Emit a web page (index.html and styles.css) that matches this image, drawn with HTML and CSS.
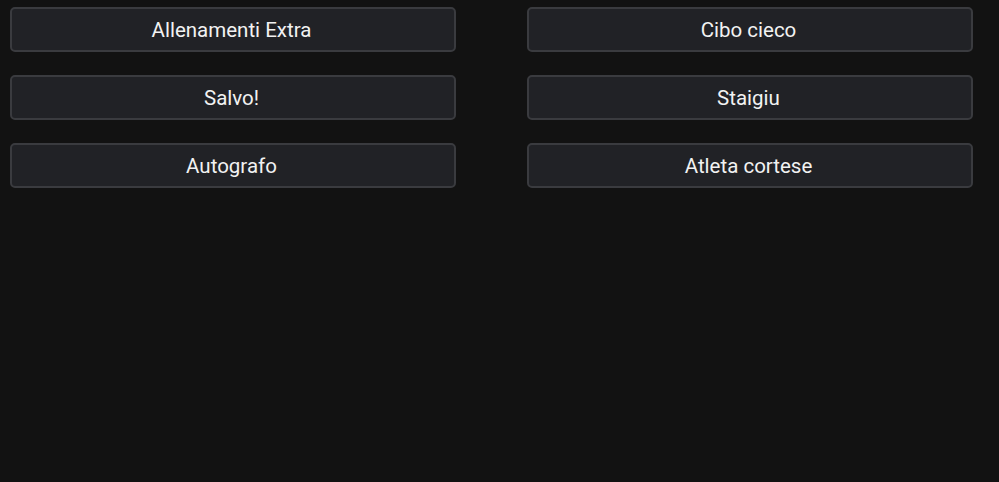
FILE: index.html
```html
<!DOCTYPE html>
<html>
<head>
<meta charset="utf-8">
<link rel="stylesheet" href="styles.css">
</head>
<body>
<div class="grid">
  <button class="btn">Allenamenti Extra</button>
  <button class="btn">Cibo cieco</button>
  <button class="btn">Salvo!</button>
  <button class="btn">Staigiu</button>
  <button class="btn">Autografo</button>
  <button class="btn">Atleta cortese</button>
</div>
</body>
</html>
```
FILE: styles.css
```css
html, body {
  margin: 0;
  padding: 0;
  background: #121212;
  height: 100%;
}
body {
  font-family: Roboto, "Liberation Sans", sans-serif;
}
.grid {
  display: grid;
  grid-template-columns: 446px 446px;
  column-gap: 71px;
  row-gap: 23px;
  padding: 7px 0 0 10px;
}
.btn {
  height: 45px;
  box-sizing: border-box;
  background: #212226;
  border: 2px solid #3a3b3f;
  border-radius: 5px;
  color: #f2f2f2;
  font-family: Roboto, "Liberation Sans", sans-serif;
  font-size: 20.5px;
  padding: 0 3px 0 0;
  margin: 0;
}
```
